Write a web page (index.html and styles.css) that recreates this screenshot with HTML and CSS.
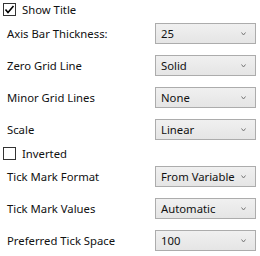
FILE: index.html
```html
<!DOCTYPE html>
<html lang="en">
<head>
  <meta charset="UTF-8">
  <title>Axis Settings</title>
  <link rel="stylesheet" href="styles.css">
</head>
<body>

  <div class="panel">
    <label class="check first">
      <svg class="box" width="13" height="13" viewBox="0 0 13 13">
        <rect x="0.5" y="0.5" width="12" height="12" fill="#fff" stroke="#333"/>
        <polyline points="2.5,6.5 5,9.5 10.5,3" fill="none" stroke="#000" stroke-width="1.6"/>
      </svg>
      <span>Show Title</span>
    </label>

    <div class="field f1">
      <span class="label">Axis Bar Thickness:</span>
      <div class="combo"><span>25</span><svg class="chev" width="5" height="4" viewBox="0 0 5 4"><polyline points="0.5,0.5 2.5,3 4.5,0.5" fill="none" stroke="#777"/></svg></div>
    </div>

    <div class="field">
      <span class="label">Zero Grid Line</span>
      <div class="combo"><span>Solid</span><svg class="chev" width="5" height="4" viewBox="0 0 5 4"><polyline points="0.5,0.5 2.5,3 4.5,0.5" fill="none" stroke="#777"/></svg></div>
    </div>

    <div class="field">
      <span class="label">Minor Grid Lines</span>
      <div class="combo"><span>None</span><svg class="chev" width="5" height="4" viewBox="0 0 5 4"><polyline points="0.5,0.5 2.5,3 4.5,0.5" fill="none" stroke="#777"/></svg></div>
    </div>

    <div class="field">
      <span class="label">Scale</span>
      <div class="combo"><span>Linear</span><svg class="chev" width="5" height="4" viewBox="0 0 5 4"><polyline points="0.5,0.5 2.5,3 4.5,0.5" fill="none" stroke="#777"/></svg></div>
    </div>

    <label class="check inv">
      <svg class="box" width="13" height="13" viewBox="0 0 13 13">
        <rect x="0.5" y="0.5" width="12" height="12" fill="#fff" stroke="#333"/>
      </svg>
      <span>Inverted</span>
    </label>

    <div class="field f6">
      <span class="label">Tick Mark Format</span>
      <div class="combo"><span>From Variable</span><svg class="chev" width="5" height="4" viewBox="0 0 5 4"><polyline points="0.5,0.5 2.5,3 4.5,0.5" fill="none" stroke="#777"/></svg></div>
    </div>

    <div class="field">
      <span class="label">Tick Mark Values</span>
      <div class="combo"><span>Automatic</span><svg class="chev" width="5" height="4" viewBox="0 0 5 4"><polyline points="0.5,0.5 2.5,3 4.5,0.5" fill="none" stroke="#777"/></svg></div>
    </div>

    <div class="field">
      <span class="label">Preferred Tick Space</span>
      <div class="combo"><span>100</span><svg class="chev" width="5" height="4" viewBox="0 0 5 4"><polyline points="0.5,0.5 2.5,3 4.5,0.5" fill="none" stroke="#777"/></svg></div>
    </div>
  </div>

</body>
</html>
```
FILE: styles.css
```css
body {
  margin: 0;
  background: #fff;
  font-family: "Noto Sans", sans-serif;
  font-size: 11.3px;
  color: #111;
}
.panel {
  padding: 3px 0 0 3px;
  display: flex;
  flex-direction: column;
}
.check {
  display: flex;
  align-items: center;
  height: 13px;
}
.check .box {
  flex: none;
  margin-right: 6px;
}
.check.inv {
  margin-top: 7px;
}
.field {
  display: flex;
  align-items: center;
  height: 21px;
  margin-top: 11px;
}
.field.f1 {
  margin-top: 7px;
}
.field.f6 {
  margin-top: 6px;
}
.label {
  width: 148px;
  padding-left: 4px;
}
.combo {
  box-sizing: border-box;
  width: 101px;
  height: 21px;
  border: 1px solid #acacac;
  background: linear-gradient(#f0f0f0, #e5e5e5);
  display: flex;
  align-items: center;
  justify-content: space-between;
  padding: 0 9px 0 5px;
}
.chev {
  flex: none;
}
```
